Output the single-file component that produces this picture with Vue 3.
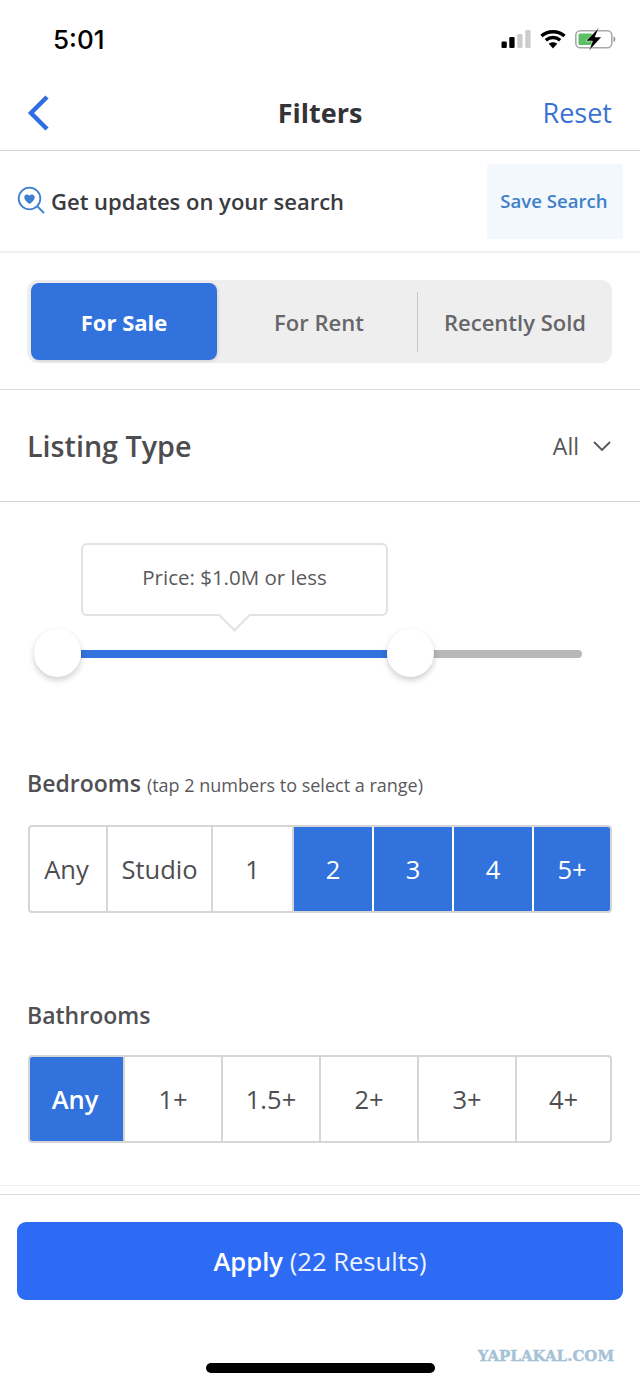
<script setup>
const bedrooms = [
  { label: 'Any', width: 78, nudge: true },
  { label: 'Studio', width: 105 },
  { label: '1', width: 81 },
  { label: '2', width: 80, active: true },
  { label: '3', width: 80, active: true },
  { label: '4', width: 80, active: true },
  { label: '5+', width: 76, active: true }
]
const bathrooms = [
  { label: 'Any', width: 95, active: true, nudge: true },
  { label: '1+', width: 98 },
  { label: '1.5+', width: 98 },
  { label: '2+', width: 98 },
  { label: '3+', width: 98 },
  { label: '4+', width: 93 }
]
</script>

<template>
  <div class="page">
    <header class="status">
      <span class="time">5:01</span>
      <div class="status-icons">
        <svg width="30" height="18" viewBox="0 0 30 18">
          <rect x="0.500" y="11.500" width="5.300" height="6.500" rx="1.300" fill="#000" />
          <rect x="8.300" y="7" width="5.300" height="11" rx="1.300" fill="#000" />
          <rect x="16.300" y="4" width="5.300" height="14" rx="1.300" fill="#ccc" />
          <rect x="24.300" y="0" width="5.300" height="18" rx="1.300" fill="#ccc" />
        </svg>
        <svg width="26" height="20" viewBox="0 0 26 20">
          <path d="M1.500 7C7.500 1.300 18.500 1.300 24.500 7" fill="none" stroke="#000" stroke-width="3.400" />
          <path d="M5.800 11.200C10 7.600 16 7.600 20.200 11.200" fill="none" stroke="#000" stroke-width="3.400" />
          <path d="M8.800 14.800C11.300 12.800 14.700 12.800 17.200 14.800L13 19.500Z" fill="#000" />
        </svg>
        <svg width="42" height="24" viewBox="0 0 42 24">
          <rect x="0.800" y="3.800" width="36" height="17" rx="4.500" fill="#fff" stroke="#a8a8a8" stroke-width="1.600" />
          <rect x="3.500" y="6.500" width="14" height="11.500" rx="1.500" fill="#5cbf62" />
          <path d="M38.500 9.500C41 10 41 14.500 38.500 15Z" fill="#999" />
          <path d="M24 0.500L11 14H17.500L14 23.800L26.500 10H20Z" fill="#000" stroke="#fff" stroke-width="0.500" />
        </svg>
      </div>
    </header>

    <nav class="nav">
      <svg class="back" width="24" height="38" viewBox="0 0 24 38">
        <path d="M20 3L4 19L20 35" fill="none" stroke="#2f6ee2" stroke-width="4.500" />
      </svg>
      <h1 class="title">Filters</h1>
      <span class="reset">Reset</span>
    </nav>

    <section class="save">
      <div class="save-text">
        <svg width="28" height="30" viewBox="0 0 28 30">
          <circle cx="12.500" cy="12.500" r="10.800" fill="none" stroke="#3d80d0" stroke-width="1.800" />
          <path d="M20.500 20.500L27 27" stroke="#3d80d0" stroke-width="1.800" />
          <path d="M12.500 18C9 15.500 7.300 13.500 7.300 11.300C7.300 8.300 11 7.500 12.500 10C14 7.500 17.700 8.300 17.700 11.300C17.700 13.500 16 15.500 12.500 18Z" fill="#3d80d0" />
        </svg>
        <span>Get updates on your search</span>
      </div>
      <button class="save-btn">Save Search</button>
    </section>

    <section class="tabs-wrap">
      <div class="tabs">
        <div class="tab tab-active">For Sale</div>
        <div class="tab tab-rent">For Rent</div>
        <div class="tab-sep"></div>
        <div class="tab tab-sold">Recently Sold</div>
      </div>
    </section>

    <section class="listing">
      <h2>Listing Type</h2>
      <div class="listing-value">
        <span>All</span>
        <svg width="20" height="12" viewBox="0 0 20 12">
          <path d="M2 2L10 10L18 2" fill="none" stroke="#555" stroke-width="1.800" />
        </svg>
      </div>
    </section>

    <section class="slider">
      <div class="tooltip">
        Price: $1.0M or less
        <span class="tooltip-arrow"></span>
      </div>
      <div class="track">
        <div class="track-fill"></div>
        <div class="track-rest"></div>
        <span class="thumb thumb-a"></span>
        <span class="thumb thumb-b"></span>
      </div>
    </section>

    <section class="group bed">
      <div class="label"><strong>Bedrooms</strong> <small>(tap 2 numbers to select a range)</small></div>
      <div class="options">
        <div
          v-for="o in bedrooms"
          :key="o.label"
          class="option"
          :class="{ on: o.active, nudge: o.nudge }"
          :style="{ width: o.width + 'px' }"
        >{{ o.label }}</div>
      </div>
    </section>

    <section class="group bath">
      <div class="label"><strong>Bathrooms</strong></div>
      <div class="options">
        <div
          v-for="o in bathrooms"
          :key="o.label"
          class="option"
          :class="{ on: o.active, big: o.active, nudge: o.nudge }"
          :style="{ width: o.width + 'px' }"
        >{{ o.label }}</div>
      </div>
    </section>

    <footer class="footer">
      <button class="apply"><b>Apply</b> <span>(22 Results)</span></button>
      <div class="bottom">
        <span class="home"></span>
        <span class="mark">YAPLAKAL.COM</span>
      </div>
    </footer>
  </div>
</template>

<style>
html, body { margin: 0; background: #fff; }
</style>

<style scoped>
.page {
  width: 640px;
  height: 1386px;
  overflow: hidden;
  background: #fff;
  font-family: "Open Sans", "Noto Sans", sans-serif;
  color: #4a4a4a;
  display: flex;
  flex-direction: column;
}
.status {
  height: 78px;
  box-sizing: border-box;
  padding: 0 23px 0 53px;
  display: flex;
  align-items: center;
  justify-content: space-between;
}
.time {
  font-family: Inter, sans-serif;
  font-size: 26px;
  font-weight: 500;
  color: #000;
}
.status-icons { display: flex; align-items: center; gap: 9px; }
.nav {
  height: 73px;
  box-sizing: border-box;
  border-bottom: 1px solid #d2d2d2;
  padding: 0 28px 3px 27px;
  display: flex;
  align-items: center;
  justify-content: space-between;
  position: relative;
}
.back { display: block; }
.title {
  position: absolute;
  left: 0;
  right: 0;
  top: 16px;
  margin: 0;
  text-align: center;
  font-size: 27px;
  line-height: 37px;
  font-weight: 700;
  color: #333338;
}
.reset { font-size: 27px; color: #3a72d4; }
.save {
  height: 102px;
  box-sizing: border-box;
  border-bottom: 2px solid #f0f0f0;
  padding: 13px 17px;
  display: flex;
  align-items: center;
  justify-content: space-between;
}
.save-text {
  display: flex;
  align-items: center;
  gap: 6px;
  font-size: 22px;
  font-weight: 600;
  color: #3a3a3f;
}
.save-btn {
  width: 136px;
  height: 75px;
  border: 0;
  padding: 0 2px 2px 0;
  border-radius: 3px;
  background: #f2f8fc;
  color: #3e80c8;
  font: 600 18.600px "Open Sans", sans-serif;
}
.tabs-wrap {
  height: 137px;
  box-sizing: border-box;
  border-bottom: 1px solid #dcdcdc;
  padding: 27px 28px 0 27px;
}
.tabs {
  height: 83px;
  box-sizing: border-box;
  padding: 3px 4px;
  background: #eeeeee;
  border-radius: 11px;
  display: flex;
  align-items: center;
  font-size: 22px;
  font-weight: 600;
  color: #66666a;
}
.tab { text-align: center; line-height: 78px; }
.tab-active {
  width: 186px;
  height: 77px;
  background: #3272dc;
  color: #fff;
  border-radius: 8px;
  font-weight: 700;
  box-shadow: 1px 1px 3px rgba(0, 0, 0, .12);
}
.tab-rent { width: 200px; padding-left: 4px; box-sizing: border-box; }
.tab-sep { width: 1px; height: 60px; background: #c8c8c8; }
.tab-sold { flex: 1; padding-left: 4px; }
.listing {
  height: 112px;
  box-sizing: border-box;
  border-bottom: 1px solid #d4d4d4;
  padding: 0 28px 0 27px;
  display: flex;
  align-items: center;
  justify-content: space-between;
}
.listing h2 {
  margin: 0;
  font-size: 28.700px;
  font-weight: 600;
  color: #4d4d50;
}
.listing-value {
  display: flex;
  align-items: center;
  gap: 13px;
  font-size: 23px;
  color: #555;
}
.slider {
  height: 230px;
  box-sizing: border-box;
  padding: 41px 0 0 81px;
  position: relative;
}
.tooltip {
  width: 307px;
  height: 73px;
  box-sizing: border-box;
  border: 2px solid #e2e2e2;
  border-radius: 6px;
  background: #fff;
  text-align: center;
  line-height: 65px;
  font-size: 20.500px;
  color: #59595c;
  position: relative;
}
.tooltip-arrow {
  position: absolute;
  left: 139.500px;
  bottom: -12.500px;
  width: 23px;
  height: 23px;
  box-sizing: border-box;
  background: #fff;
  border-right: 2px solid #e2e2e2;
  border-bottom: 2px solid #e2e2e2;
  transform: rotate(45deg);
}
.track {
  width: 501px;
  height: 8px;
  margin-top: 34px;
  display: flex;
  position: relative;
}
.track-fill { width: 306px; background: #3272dc; }
.track-rest {
  flex: 1;
  background: #b8b8b8;
  border-radius: 0 4px 4px 0;
}
.thumb {
  position: absolute;
  top: -21px;
  width: 47px;
  height: 48px;
  border-radius: 50%;
  background: #fff;
  box-shadow: 0 3px 6px rgba(0, 0, 0, .2);
}
.thumb-a { left: -47px; }
.thumb-b { left: 306px; }
.group { padding: 0 28px; box-sizing: border-box; }
.bed { height: 268px; padding-top: 36px; }
.bath { height: 186px; border-bottom: 1px solid #ececec; }
.label {
  height: 55px;
  margin-left: -1px;
  display: flex;
  align-items: baseline;
  gap: 6px;
  line-height: 30px;
}
.bed .label { height: 57px; }
.label strong { font-size: 23px; font-weight: 600; color: #505054; }
.label small { font-size: 18px; font-weight: 400; color: #59595c; }
.options {
  height: 88px;
  box-sizing: border-box;
  border: 2px solid #d6d6d6;
  border-radius: 4px;
  display: flex;
  overflow: hidden;
}
.option {
  box-sizing: border-box;
  border-right: 2px solid #d6d6d6;
  text-align: center;
  line-height: 84px;
  font-size: 25.500px;
  color: #4e4e52;
  flex: none;
}
.option.nudge { padding-right: 3px; }
.option:last-child { border-right: 0; }
.option.on { background: #3272dc; color: #fff; border-right-color: #fff; }
.bath .option.on { border-right-color: #d6d6d6; }
.option.big { font-weight: 600; }
.footer {
  border-top: 1px solid #dedede;
  margin-top: 8px;
  padding: 27px 17px 0;
}
.apply {
  display: block;
  width: 606px;
  height: 78px;
  border: 0;
  border-radius: 9px;
  background: #2d6bf5;
  color: #fff;
  font: 400 25.600px "Open Sans", sans-serif;
}
.apply b { font-weight: 600; }
.apply span { opacity: .92; }
.bottom { position: relative; height: 86px; }
.home {
  position: absolute;
  left: 189px;
  top: 63px;
  width: 229px;
  height: 10px;
  border-radius: 5px;
  background: #000;
}
.mark {
  position: absolute;
  right: 9px;
  top: 47px;
  font-family: "DejaVu Serif", serif;
  font-size: 15px;
  line-height: 18px;
  font-weight: 700;
  -webkit-text-stroke: .4px #a5c2d6;
  color: #a5c2d6;
}
</style>
